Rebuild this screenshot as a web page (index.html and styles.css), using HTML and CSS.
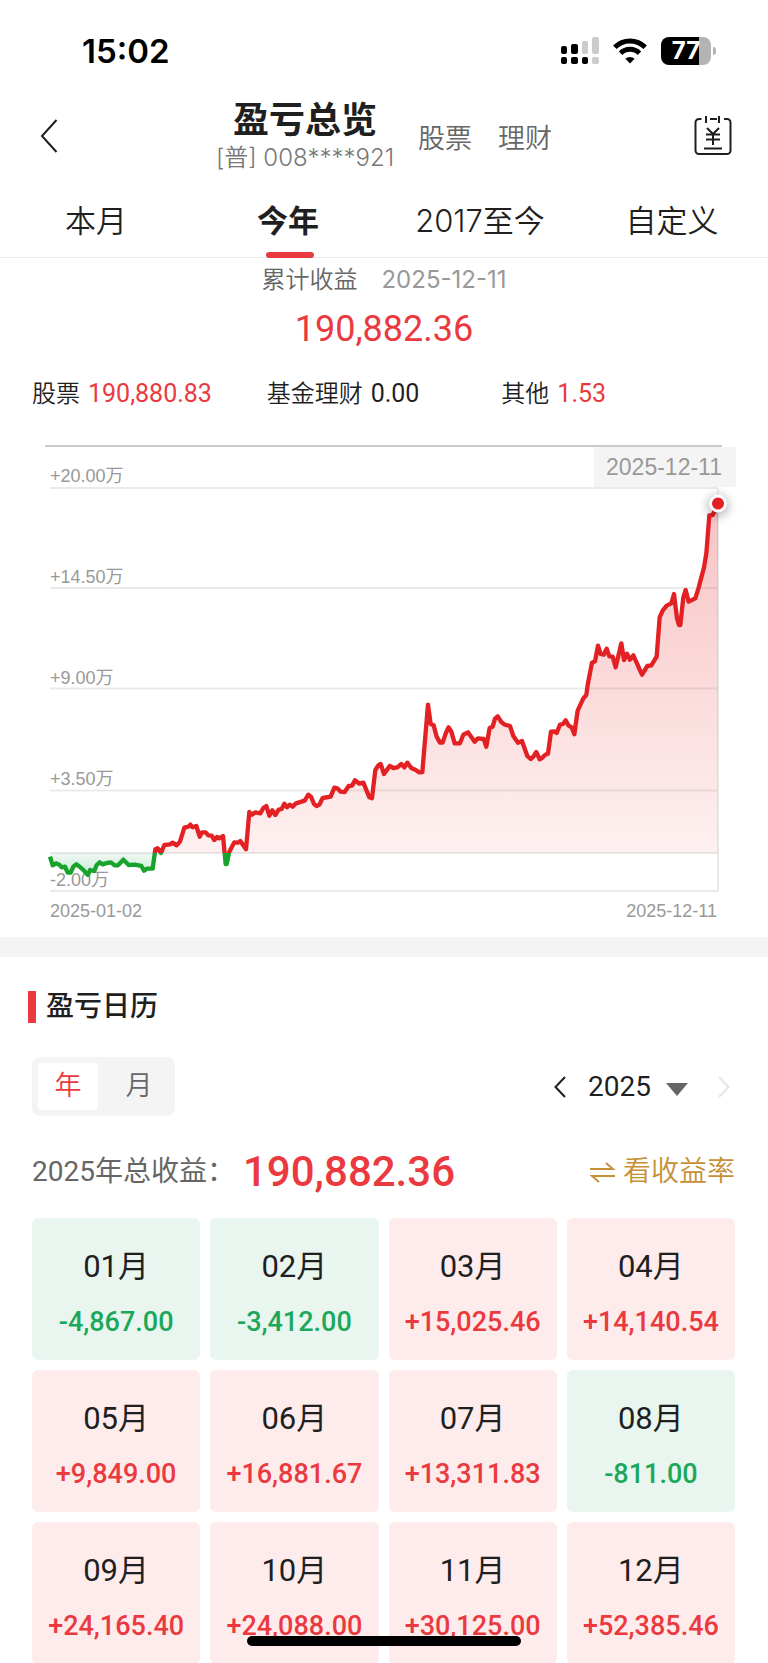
FILE: index.html
```html
<!DOCTYPE html>
<html lang="zh-CN">
<head>
<meta charset="utf-8">
<meta name="viewport" content="width=device-width, initial-scale=1">
<title>盈亏总览</title>
<link rel="stylesheet" href="styles.css">
</head>
<body>
<div class="screen">
  <div class="status">
    <span class="status-time">15:02</span>
    <div class="status-icons">
      <svg class="icon-signal" viewBox="0 0 38 28" aria-hidden="true">
        <rect x="0" y="9" width="6" height="8" rx="2"/><rect x="10" y="7" width="7" height="10" rx="2"/>
        <rect class="dim" x="21" y="4" width="6" height="13" rx="2"/><rect class="dim" x="31" y="0" width="7" height="17" rx="2"/>
        <rect x="0" y="20" width="6" height="7" rx="2"/><rect x="10" y="20" width="7" height="7" rx="2"/>
        <rect x="21" y="20" width="6" height="7" rx="2"/><rect class="dim" x="31" y="20" width="7" height="7" rx="2"/>
      </svg>
      <svg class="icon-wifi" viewBox="0 0 34 26" aria-hidden="true">
        <path class="arc" d="M1.8 9.2a21.5 21.5 0 0 1 30.4 0"/>
        <path class="arc" d="M7.6 15.2a13.3 13.3 0 0 1 18.8 0"/>
        <path d="M17 25.5l-4.6-4.7a6.6 6.6 0 0 1 9.2 0z"/>
      </svg>
      <div class="battery"><span class="battery-body">77</span><span class="battery-cap"></span></div>
    </div>
  </div>

  <header class="topbar">
    <button class="icon-button" type="button" aria-label="返回">
      <svg class="icon-back" viewBox="0 0 18 34"><path d="M16.5 1L2 17l14.500 16"/></svg>
    </button>
    <div class="heading">
      <div class="account">
        <h1 class="title">盈亏总览</h1>
        <p class="account-no">[普] 008****921</p>
      </div>
      <nav class="kinds"><a href="#stock">股票</a><a href="#wealth">理财</a></nav>
    </div>
    <button class="icon-button end" type="button" aria-label="账单">
      <svg class="icon-bill" viewBox="0 0 38 40">
        <path d="M7.500 3H5a3.500 3.500 0 0 0-3.500 3.500v28A3.500 3.500 0 0 0 5 38h28a3.500 3.500 0 0 0 3.500-3.500v-28A3.500 3.500 0 0 0 33 3h-3M16 3h7M12 0v7M25 0v7"/>
        <path d="M13 12l6 6 6-6M19 18v11M12 18.500h14M12 23.500h14M10 32.500h18"/>
      </svg>
    </button>
  </header>

  <nav class="tabs">
    <a class="tab" href="#month">本月</a>
    <a class="tab active" href="#year" aria-current="page">今年</a>
    <a class="tab" href="#all">2017至今</a>
    <a class="tab" href="#custom">自定义</a>
  </nav>

  <section class="summary">
    <p class="summary-label"><span>累计收益</span><time>2025-12-11</time></p>
    <p class="summary-total">190,882.36</p>
    <dl class="parts">
      <div><dt>股票</dt><dd class="up">190,880.83</dd></div>
      <div><dt>基金理财</dt><dd>0.00</dd></div>
      <div><dt>其他</dt><dd class="up">1.53</dd></div>
    </dl>
  </section>

  <svg class="chart" viewBox="0 0 768 507" role="img" aria-label="累计收益走势">
    <defs>
      <linearGradient id="gain" gradientUnits="userSpaceOnUse" x1="0" y1="221" x2="0" y2="1269">
        <stop offset="0" stop-color="#e01f24" stop-opacity=".27"/><stop offset="1" stop-color="#ee2a2a" stop-opacity=".07"/>
      </linearGradient>
      <linearGradient id="loss" gradientUnits="userSpaceOnUse" x1="0" y1="1269" x2="0" y2="1335">
        <stop offset="0" stop-color="#17a048" stop-opacity=".07"/><stop offset="1" stop-color="#17a048" stop-opacity=".22"/>
      </linearGradient>
      <clipPath id="above"><rect x="0" y="0" width="2304" height="1269"/></clipPath>
      <clipPath id="below"><rect x="0" y="1269" width="2304" height="200"/></clipPath>
      <filter id="glow" x="-100%" y="-100%" width="300%" height="300%"><feGaussianBlur stdDeviation="5"/></filter>
      <path id="curve" d="M150 1280L158 1306 168 1300 178 1304 185 1312 195 1310 203 1328 212 1328 220 1310 229 1303 240 1311 252 1322 264 1335 270 1320 283 1323 290 1305 299 1297 308 1303 320 1299 333 1297 344 1306 354 1306 370 1289 386 1305 404 1304 424 1308 432 1322 440 1316 458 1316 466 1258 473 1255 483 1269 493 1245 510 1243 518 1238 530 1246 540 1235 553 1193 565 1190 571 1184 578 1192 589 1188 599 1220 606 1207 617 1207 625 1216 635 1217 643 1230 651 1221 658 1225 669 1218 677 1302 680 1302 688 1265 703 1237 714 1238 721 1233 738 1258 748 1146 756 1154 766 1147 781 1150 790 1134 799 1128 808 1157 817 1141 826 1155 836 1139 845 1137 853 1121 861 1132 869 1124 878 1130 888 1120 914 1112 925 1094 933 1100 942 1122 950 1128 958 1124 968 1104 992 1100 1003 1073 1012 1075 1022 1085 1034 1086 1046 1068 1056 1067 1065 1051 1078 1061 1090 1058 1108 1102 1116 1105 1126 1020 1135 1006 1142 1002 1152 1032 1169 1008 1180 1014 1192 1012 1204 1002 1213 1012 1222 998 1234 1014 1247 1020 1258 1027 1267 1026 1284 824 1292 882 1301 886 1310 920 1320 938 1328 938 1338 908 1346 892 1354 905 1364 940 1380 940 1390 914 1404 907 1424 935 1434 925 1451 927 1459 950 1469 894 1478 890 1485 866 1493 859 1504 876 1514 884 1530 888 1540 918 1554 938 1566 933 1582 978 1592 987 1600 980 1609 966 1619 988 1628 982 1636 974 1644 971 1653 905 1662 904 1670 909 1680 884 1689 882 1697 871 1705 886 1715 892 1723 913 1733 842 1750 805 1759 795 1763 765 1776 698 1785 694 1794 647 1802 672 1811 674 1820 656 1828 679 1838 680 1847 712 1864 640 1872 690 1881 671 1890 689 1900 676 1926 734 1942 708 1954 706 1970 680 1979 562 1988 542 2000 527 2014 520 2022 492 2031 565 2037 585 2041 585 2050 502 2057 480 2066 515 2086 505 2096 473 2112 412 2119 370 2128 256 2138 255 2154 221"/>
    </defs>
    <path class="frame-top" d="M45 16H722"/>
    <path class="grid" d="M50 58H718M50 158H718M50 258.500H718M50 360.500H718M50 423H718M50 461H718M718 58V461"/>
    <g class="axis">
      <text x="50" y="52">+20.00万</text>
      <text x="50" y="153">+14.50万</text>
      <text x="50" y="254">+9.00万</text>
      <text x="50" y="355">+3.50万</text>
      <text x="50" y="456">-2.00万</text>
      <text x="50" y="487">2025-01-02</text>
      <text x="717" y="487" text-anchor="end">2025-12-11</text>
    </g>
    <g transform="scale(.33333)">
      <g clip-path="url(#above)">
        <path fill="url(#gain)" d="M466 1269L466 1258 473 1255 483 1269 493 1245 510 1243 530 1246 540 1235 553 1193 571 1184 589 1188 599 1220 606 1207 617 1207 643 1230 669 1218 675 1269 688 1265 703 1237 721 1233 738 1258 748 1146 781 1150 799 1128 808 1157 836 1139 853 1121 888 1120 914 1112 925 1094 950 1128 968 1104 992 1100 1003 1073 1034 1086 1065 1051 1090 1058 1116 1105 1126 1020 1142 1002 1152 1032 1169 1008 1222 998 1258 1027 1267 1026 1284 824 1292 882 1301 886 1320 938 1328 938 1346 892 1364 940 1380 940 1404 907 1424 935 1434 925 1451 927 1459 950 1469 894 1478 890 1493 859 1514 884 1530 888 1540 918 1554 938 1566 933 1592 987 1609 966 1619 988 1644 971 1653 905 1670 909 1697 871 1723 913 1733 842 1759 795 1776 698 1785 694 1794 647 1811 674 1820 656 1838 680 1847 712 1864 640 1872 690 1900 676 1926 734 1954 706 1970 680 1979 562 2000 527 2014 520 2022 492 2039 585 2057 480 2066 515 2086 505 2112 412 2119 370 2128 256 2138 255 2154 221V1269Z"/>
        <use class="curve gain" href="#curve"/>
      </g>
      <g clip-path="url(#below)">
        <path fill="url(#loss)" d="M150 1269V1280L158 1306 178 1304 203 1328 212 1328 229 1303 264 1335 283 1323 299 1297 333 1297 354 1306 370 1289 386 1305 424 1308 432 1322 458 1316 465 1269Z"/>
        <use class="curve loss" href="#curve"/>
      </g>
    </g>
    <rect class="tip" x="594" y="17" width="142" height="40"/>
    <text class="tip-text" x="664" y="45" text-anchor="middle">2025-12-11</text>
    <circle class="halo" cx="718" cy="76" r="11" filter="url(#glow)"/>
    <circle class="dot" cx="718" cy="73.500" r="7.500"/>
  </svg>

  <section class="calendar">
    <h2 class="section-title">盈亏日历</h2>
    <div class="controls">
      <div class="segmented">
        <button class="segment on" type="button" aria-pressed="true">年</button>
        <button class="segment" type="button" aria-pressed="false">月</button>
      </div>
      <div class="picker">
        <button class="step" type="button" aria-label="上一年"><svg viewBox="0 0 12 22"><path d="M11 1L1.500 11 11 21"/></svg></button>
        <label class="year">
          <select aria-label="年份"><option>2025</option></select>
          <svg class="caret" viewBox="0 0 22 13" aria-hidden="true"><path d="M0 0h22L11 13z"/></svg>
        </label>
        <button class="step" type="button" aria-label="下一年" disabled><svg viewBox="0 0 12 22"><path d="M1 1l9.500 10L1 21"/></svg></button>
      </div>
    </div>
    <div class="year-total">
      <span class="year-label">2025年总收益：</span>
      <strong class="year-value">190,882.36</strong>
      <button class="switch" type="button">
        <svg viewBox="0 0 25 21" aria-hidden="true"><path d="M0 7h23L16 1M25 14H2l7 6"/></svg>看收益率
      </button>
    </div>
    <ul class="months">
      <li class="month down"><span>01月</span><b>-4,867.00</b></li>
      <li class="month down"><span>02月</span><b>-3,412.00</b></li>
      <li class="month"><span>03月</span><b>+15,025.46</b></li>
      <li class="month"><span>04月</span><b>+14,140.54</b></li>
      <li class="month"><span>05月</span><b>+9,849.00</b></li>
      <li class="month"><span>06月</span><b>+16,881.67</b></li>
      <li class="month"><span>07月</span><b>+13,311.83</b></li>
      <li class="month down"><span>08月</span><b>-811.00</b></li>
      <li class="month"><span>09月</span><b>+24,165.40</b></li>
      <li class="month"><span>10月</span><b>+24,088.00</b></li>
      <li class="month"><span>11月</span><b>+30,125.00</b></li>
      <li class="month"><span>12月</span><b>+52,385.46</b></li>
    </ul>
  </section>
  <div class="home-bar"></div>
</div>
</body>
</html>
```
FILE: styles.css
```css
:root {
  --ink: #1f1f1f;
  --muted: #666;
  --faint: #999;
  --red: #ea3a40;
  --green: #1ca75a;
  --gold: #c59038;
  --panel: #f4f4f4;
  --wide: Inter, "Noto Sans CJK SC", sans-serif;
}

* { box-sizing: border-box; }

body, h1, h2, p, dl, dd, ul { margin: 0; padding: 0; }

body {
  background: #fff;
  color: var(--ink);
  font-family: Roboto, "Noto Sans CJK SC", sans-serif;
  font-weight: 350;
}

button, select {
  border: 0;
  padding: 0;
  background: none;
  color: inherit;
  font: inherit;
}

a { color: inherit; text-decoration: none; }

svg { display: block; fill: none; }

.screen { height: 100vh; overflow: hidden; }

/* Status bar */
.status {
  display: flex;
  justify-content: space-between;
  align-items: center;
  height: 102px;
  padding: 0 52px 0 82px;
}
.status-time { color: #000; font: 600 33px/40px Inter, sans-serif; }
.status-icons { display: flex; align-items: center; gap: 14px; }
.icon-signal { width: 38px; height: 28px; fill: #000; }
.icon-signal .dim { fill: #ccc; }
.icon-wifi { width: 34px; height: 26px; fill: #000; }
.icon-wifi .arc { fill: none; stroke: #000; stroke-width: 5; }
.battery { display: flex; align-items: center; gap: 2px; }
.battery-body {
  width: 50px;
  height: 28px;
  border-radius: 8px;
  background: linear-gradient(90deg, #000 77%, #b3b3b3 77%);
  color: #fff;
  font: 700 24px/28px Inter, sans-serif;
  text-align: center;
}
.battery-cap { width: 3px; height: 8px; border-radius: 0 4px 4px 0; background: #b3b3b3; }

/* Title bar */
.topbar {
  display: grid;
  grid-template-columns: 64px 1fr 68px;
  align-items: center;
  height: 68px;
  padding: 0 36px 0 40px;
}
.icon-button { height: 40px; display: flex; align-items: center; align-self: start; margin-top: 14px; }
.icon-button.end { justify-content: flex-end; }
.icon-back { width: 18px; height: 34px; stroke: var(--ink); stroke-width: 2; }
.icon-bill { width: 38px; height: 40px; stroke: var(--ink); stroke-width: 2; }
.heading { display: flex; justify-content: center; align-items: center; gap: 24px; }
.account { text-align: center; }
.title { font-size: 36px; line-height: 38px; font-weight: 700; }
.account-no { color: #777; font-family: var(--wide); font-size: 24px; line-height: 36px; }
.kinds { display: flex; gap: 26px; color: var(--muted); font-size: 27px; line-height: 36px; }

/* Period tabs */
.tabs {
  display: grid;
  grid-template-columns: repeat(4, 1fr);
  height: 88px;
  border-bottom: 1px solid #eee;
}
.tab {
  position: relative;
  padding-top: 26px;
  font-family: var(--wide);
  font-size: 31px;
  line-height: 50px;
  text-align: center;
}
.tab.active { font-weight: 700; }
.tab.active::after {
  content: "";
  position: absolute;
  left: 50%;
  bottom: -1px;
  width: 48px;
  height: 6px;
  margin-left: -22px;
  border-radius: 3px;
  background: var(--red);
}

/* Summary */
.summary { padding: 4px 32px 0; }
.summary-label {
  display: flex;
  justify-content: center;
  gap: 24px;
  color: var(--muted);
  font-family: var(--wide);
  font-size: 24px;
  line-height: 36px;
}
.summary-label time { color: var(--faint); font-weight: 400; }
.summary-total {
  padding-top: 6px;
  color: var(--red);
  font-size: 36px;
  font-weight: 400;
  line-height: 50px;
  text-align: center;
}
.parts {
  display: grid;
  grid-template-columns: repeat(3, 1fr);
  padding-top: 20px;
  font-size: 24px;
  line-height: 40px;
}
.parts div { display: flex; gap: 8px; }
.parts dd { font-size: 25px; font-weight: 400; }
.up { color: var(--red); }

/* Trend chart */
.chart { width: 100%; margin-top: 16px; }
.frame-top { stroke: #c8cbca; stroke-width: 2; }
.grid { stroke: #e9ebea; stroke-width: 2; }
.axis { fill: var(--faint); font: 18px "Liberation Sans", "Noto Sans CJK SC", sans-serif; }
.curve { stroke-width: 13; stroke-linejoin: round; }
.curve.gain { stroke: #e32124; }
.curve.loss { stroke: #17a32c; }
.tip { fill: var(--panel); }
.tip-text { fill: var(--faint); font: 23px "Liberation Sans", sans-serif; }
.halo { fill: #000; fill-opacity: .25; }
.dot { fill: #e32124; stroke: #fff; stroke-width: 3; }

/* Profit calendar */
.calendar { padding: 32px 33px 0 32px; border-top: 20px solid var(--panel); }
.section-title {
  display: flex;
  align-items: center;
  gap: 10px;
  margin-left: -4px;
  font-size: 28px;
  line-height: 36px;
  font-weight: 500;
}
.section-title::before { content: ""; width: 8px; height: 32px; background: var(--red); }
.controls {
  display: flex;
  justify-content: space-between;
  align-items: center;
  padding-top: 32px;
}
.segmented { display: flex; gap: 11px; padding: 6px; border-radius: 8px; background: var(--panel); }
.segment {
  width: 60px;
  height: 47px;
  border-radius: 4px;
  color: var(--muted);
  font-size: 27px;
  line-height: 47px;
}
.segment.on { background: #fff; color: var(--red); }
.picker { display: flex; align-items: center; padding-right: 5px; }
.step svg { width: 12px; height: 22px; stroke: var(--ink); stroke-width: 2; }
.step:disabled svg { stroke: #e6e6e6; }
.year { display: flex; align-items: center; gap: 15px; padding: 0 30px 0 22px; }
.year select { appearance: none; font-size: 28px; font-weight: 400; line-height: 36px; }
.caret { width: 22px; height: 13px; margin-top: 6px; fill: var(--muted); }
.year-total { display: flex; align-items: center; height: 102px; padding-top: 10px; }
.year-label { width: 211px; color: var(--muted); font-size: 28px; font-weight: 400; line-height: 40px; white-space: nowrap; }
.year-value { color: var(--red); font-size: 42px; line-height: 52px; font-weight: 500; }
.switch {
  display: flex;
  align-items: center;
  gap: 8px;
  margin-left: auto;
  color: var(--gold);
  font-size: 28px;
  line-height: 40px;
}
.switch svg { width: 25px; height: 21px; stroke: var(--gold); stroke-width: 2; }
.months {
  display: grid;
  grid-template-columns: repeat(4, 1fr);
  gap: 10px;
  list-style: none;
}
.month {
  display: flex;
  flex-direction: column;
  align-items: center;
  gap: 12px;
  height: 142px;
  padding-top: 26px;
  border-radius: 6px;
  background: #feebeb;
}
.month.down { background: #e8f6ef; }
.month span { font-size: 31px; font-weight: 400; line-height: 46px; }
.month b { color: var(--red); font-size: 27px; line-height: 40px; font-weight: 500; }
.month.down b { color: var(--green); }

.home-bar {
  position: fixed;
  left: 50%;
  bottom: 17px;
  width: 274px;
  height: 10px;
  margin-left: -137px;
  border-radius: 5px;
  background: #000;
}
```
